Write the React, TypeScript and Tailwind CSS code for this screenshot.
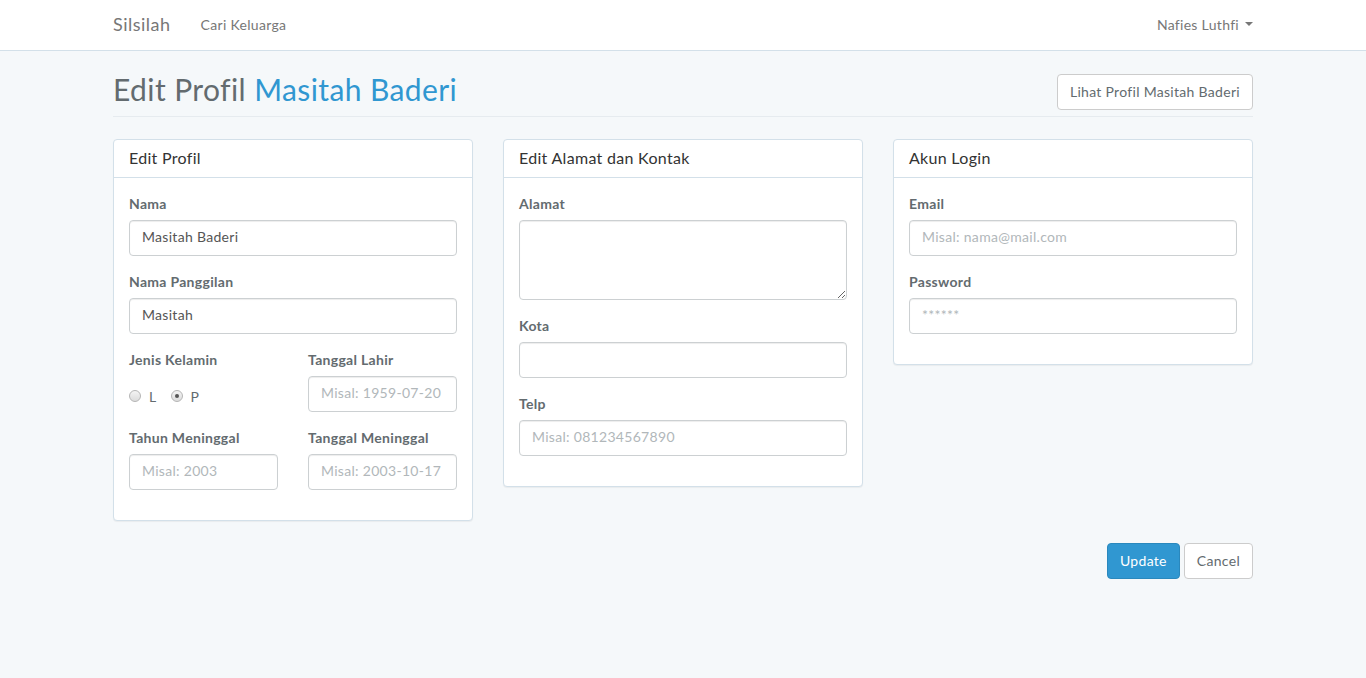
import React from "react";

const inputCls =
  "block w-full h-[36px] px-3 pb-[3px] rounded-[4px] border border-[#ccd0d2] bg-white text-[14px] text-[#555555] shadow-[inset_0_1px_1px_rgba(0,0,0,0.075)] outline-none placeholder:text-[#b1b7ba]";

const labelCls = "block mb-[5px] text-[14px] leading-[22px] font-bold text-[#636b6f]";

const btnCls = "h-[36px] px-3 pb-[2px] rounded-[4px] border text-[14px]";

type FieldProps = {
  label: string;
  value?: string;
  placeholder?: string;
  type?: string;
};

const Field: React.FC<FieldProps> = ({ label, value, placeholder, type = "text" }) => (
  <div className="mb-[15px]">
    <label className={labelCls}>{label}</label>
    <input type={type} className={inputCls} defaultValue={value} placeholder={placeholder} />
  </div>
);

const Panel: React.FC<{ title: string; children: React.ReactNode }> = ({ title, children }) => (
  <div className="bg-white border border-[#d3e0e9] rounded-[4px] shadow-[0_1px_1px_rgba(0,0,0,0.05)]">
    <div className="h-[38px] px-[15px] pb-[2px] flex items-center border-b border-[#d3e0e9] text-[16px] text-[#333333]">
      {title}
    </div>
    <div className="p-[15px] pb-0">{children}</div>
  </div>
);

const Radio: React.FC<{ label: string; checked?: boolean }> = ({ label, checked }) => (
  <label className="flex items-center gap-[8px] text-[14px] text-[#636b6f]">
    <span className="w-[12px] h-[12px] rounded-full border border-[#b5b5b5] bg-gradient-to-b from-[#f4f4f4] to-[#dcdcdc] flex items-center justify-center">
      {checked && <span className="w-[4px] h-[4px] rounded-full bg-[#555]" />}
    </span>
    {label}
  </label>
);

export default function App() {
  return (
    <div
      className="min-h-screen bg-[#f5f8fa] text-[#636b6f] text-[14px] tracking-[0.3px]"
      style={{ fontFamily: "Lato, 'Open Sans', sans-serif" }}
    >
      {/* navbar */}
      <nav className="h-[51px] bg-white border-b border-[#d3e0e9]">
        <div className="w-[1140px] mx-auto h-[50px] pb-[2px] flex items-center justify-between">
          <div className="flex items-center gap-[30px]">
            <span className="text-[18px] text-[#777777] tracking-[0.5px]">Silsilah</span>
            <span className="text-[14px] text-[#777777]">Cari Keluarga</span>
          </div>
          <div className="flex items-center gap-[6px] text-[14px] text-[#777777]">
            Nafies Luthfi
            <span className="inline-block w-0 h-0 border-t-[4px] border-t-[#777777] border-x-[4px] border-x-transparent" />
          </div>
        </div>
      </nav>

      <div className="w-[1140px] mx-auto">
        {/* page header */}
        <div className="mt-[23px] pb-[6px] border-b border-[#e6ebef] flex items-center justify-between">
          <h2 className="h-[36px] text-[30px] leading-[31px] text-[#636b6f] tracking-[0.4px]">
            Edit Profil <span className="text-[#3097d1]">Masitah Baderi</span>
          </h2>
          <button className={`${btnCls} border-[#cccccc] bg-white text-[#636b6f]`}>
            Lihat Profil Masitah Baderi
          </button>
        </div>

        {/* panels */}
        <div className="mt-[22px] grid grid-cols-3 gap-[30px] items-start">
          <Panel title="Edit Profil">
            <Field label="Nama" value="Masitah Baderi" />
            <Field label="Nama Panggilan" value="Masitah" />
            <div className="grid grid-cols-2 gap-[30px]">
              <div className="mb-[15px]">
                <label className={labelCls}>Jenis Kelamin</label>
                <div className="h-[36px] flex items-center gap-[14px] pt-[4px]">
                  <Radio label="L" />
                  <Radio label="P" checked />
                </div>
              </div>
              <Field label="Tanggal Lahir" placeholder="Misal: 1959-07-20" />
            </div>
            <div className="grid grid-cols-2 gap-[30px] pb-[15px]">
              <Field label="Tahun Meninggal" placeholder="Misal: 2003" />
              <Field label="Tanggal Meninggal" placeholder="Misal: 2003-10-17" />
            </div>
          </Panel>

          <Panel title="Edit Alamat dan Kontak">
            <div className="mb-[15px]">
              <label className={labelCls}>Alamat</label>
              <textarea
                className="block w-full h-[80px] px-3 py-[6px] rounded-[4px] border border-[#ccd0d2] bg-white text-[14px] text-[#555555] shadow-[inset_0_1px_1px_rgba(0,0,0,0.075)] outline-none"
                rows={3}
              />
            </div>
            <Field label="Kota" />
            <div className="pb-[15px]">
              <Field label="Telp" placeholder="Misal: 081234567890" />
            </div>
          </Panel>

          <Panel title="Akun Login">
            <Field label="Email" placeholder="Misal: nama@mail.com" />
            <div className="pb-[15px]">
              <Field label="Password" type="password" placeholder="******" />
            </div>
          </Panel>
        </div>

        {/* actions */}
        <div className="mt-[22px] flex justify-end gap-[4px]">
          <button className={`${btnCls} border-[#2a88bd] bg-[#3097d1] text-white`}>Update</button>
          <button className={`${btnCls} border-[#cccccc] bg-white text-[#636b6f]`}>Cancel</button>
        </div>
      </div>
    </div>
  );
}
